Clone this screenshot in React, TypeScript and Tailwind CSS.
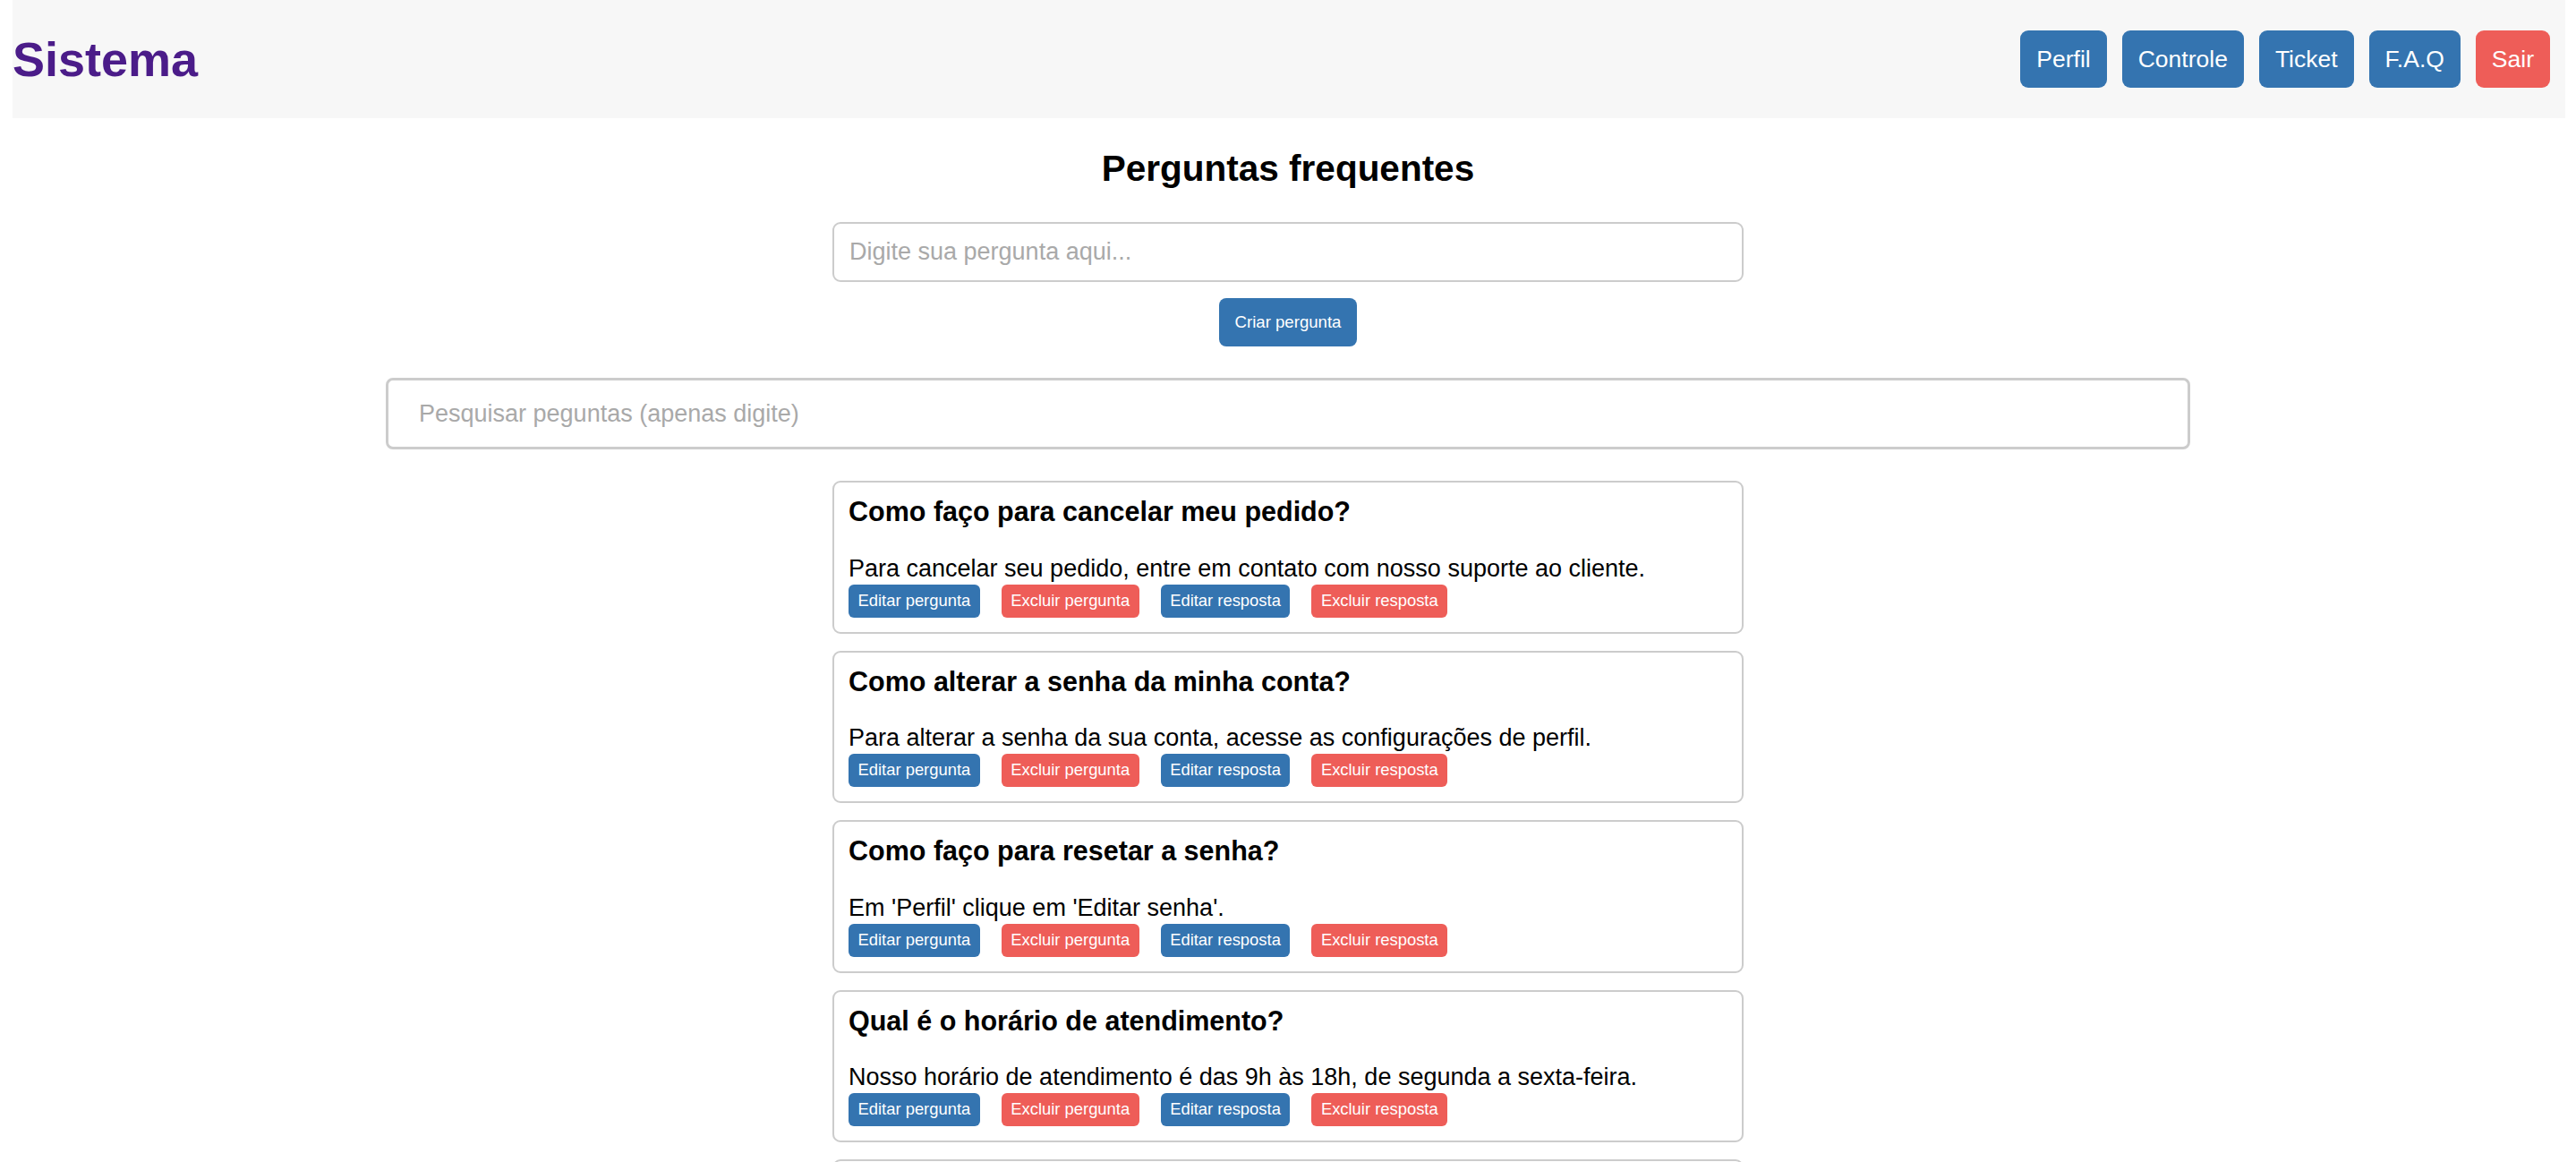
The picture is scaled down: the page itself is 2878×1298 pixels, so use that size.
import React from "react";

const navLinks = [
  { label: "Perfil", danger: false },
  { label: "Controle", danger: false },
  { label: "Ticket", danger: false },
  { label: "F.A.Q", danger: false },
  { label: "Sair", danger: true },
];

const faqs = [
  {
    q: "Como faço para cancelar meu pedido?",
    a: "Para cancelar seu pedido, entre em contato com nosso suporte ao cliente.",
  },
  {
    q: "Como alterar a senha da minha conta?",
    a: "Para alterar a senha da sua conta, acesse as configurações de perfil.",
  },
  {
    q: "Como faço para resetar a senha?",
    a: "Em 'Perfil' clique em 'Editar senha'.",
  },
  {
    q: "Qual é o horário de atendimento?",
    a: "Nosso horário de atendimento é das 9h às 18h, de segunda a sexta-feira.",
  },
  {
    q: "Como entro em contato com o suporte?",
    a: "Abra um ticket na página 'Ticket' e aguarde o retorno da equipe.",
  },
];

function SmallButton({ label, danger }: { label: string; danger?: boolean }) {
  return (
    <button
      className={
        danger
          ? "h-[37px] px-[10.5px] rounded-[6px] bg-[#ee5d58] text-white text-[18.4px] leading-none flex items-center"
          : "h-[37px] px-[10.5px] rounded-[6px] bg-[#3474b0] text-white text-[18.4px] leading-none flex items-center"
      }
    >
      {label}
    </button>
  );
}

export default function App() {
  return (
    <div className="min-h-screen bg-white font-['Liberation_Sans',Arial,sans-serif] text-black">
      <header className="ml-[14px] mr-[12px] h-[132px] bg-[#f7f7f7] flex items-center justify-between pr-[17px]">
        <h1 className="text-[54px] font-bold text-[#4b1c89] leading-none">Sistema</h1>
        <nav className="flex items-center gap-[17px]">
          {navLinks.map((l) => (
            <button
              key={l.label}
              className={
                l.danger
                  ? "h-[64px] px-[18px] rounded-[9px] bg-[#ee5d58] text-white text-[26.5px] leading-none flex items-center"
                  : "h-[64px] px-[18px] rounded-[9px] bg-[#3474b0] text-white text-[26.5px] leading-none flex items-center"
              }
            >
              {l.label}
            </button>
          ))}
        </nav>
      </header>

      <main className="flex flex-col items-center">
        <h2 className="mt-[33px] text-[40.5px] font-bold leading-[46px]">Perguntas frequentes</h2>
        <input
          className="mt-[37px] w-[1018px] h-[67px] border-2 border-[#cccccc] rounded-[9px] px-[17px] text-[27px] placeholder:text-[#a9a9a9] outline-none"
          placeholder="Digite sua pergunta aqui..."
        />
        <button className="mt-[18px] h-[54px] px-[18px] rounded-[8px] bg-[#3474b0] text-white text-[18.6px] leading-none">
          Criar pergunta
        </button>
        <input
          className="mt-[35px] w-[2016px] h-[80px] border-[3px] border-[#cccccc] rounded-[8px] pl-[34px] text-[27px] placeholder:text-[#a9a9a9] outline-none"
          placeholder="Pesquisar peguntas (apenas digite)"
        />

        <div className="mt-[35px] w-[1018px] flex flex-col gap-[19px]">
          {faqs.map((f) => (
            <div key={f.q} className="border-2 border-[#cccccc] rounded-[9px] pt-[15px] pb-[16px] px-[16px]">
              <h3 className="text-[30.5px] font-bold leading-[34.5px]">{f.q}</h3>
              <p className="mt-[31px] text-[27px] leading-[31px]">{f.a}</p>
              <div className="mt-[2px] flex gap-[24px]">
                <SmallButton label="Editar pergunta" />
                <SmallButton label="Excluir pergunta" danger />
                <SmallButton label="Editar resposta" />
                <SmallButton label="Excluir resposta" danger />
              </div>
            </div>
          ))}
        </div>
      </main>
    </div>
  );
}
